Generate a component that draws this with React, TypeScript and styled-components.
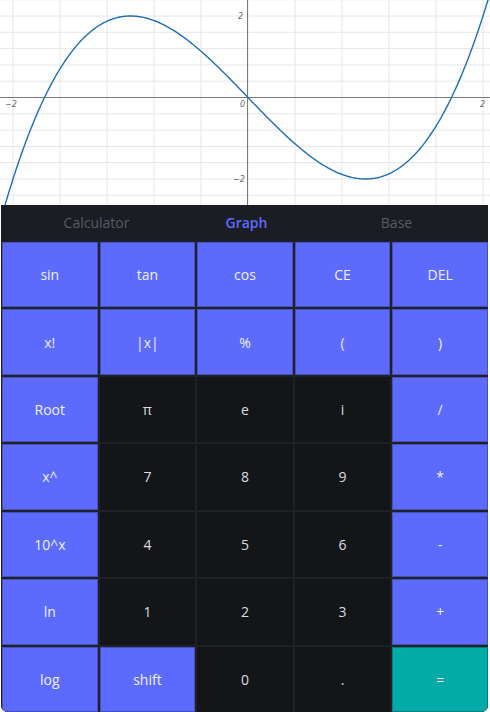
import React from 'react';
import styled, { createGlobalStyle } from 'styled-components';

const GlobalStyle = createGlobalStyle`
  html, body {
    margin: 0;
    padding: 0;
    background: #d6d6d8;
  }
  body {
    font-family: "Open Sans", "Noto Sans", sans-serif;
    overflow: hidden;
  }
`;

const Page = styled.div`
  width: 490px;
  height: 712px;
  display: flex;
  flex-direction: column;
  background: #ffffff;
`;

const Plot = styled.svg`
  display: block;
  flex: 0 0 205px;
  background: #ffffff;
`;

const Panel = styled.div`
  flex: 1;
  margin: 0 2px 0 1px;
  display: flex;
  flex-direction: column;
  background: #1f2026;
  border-radius: 0 0 7px 7px;
  overflow: hidden;
`;

const Tabs = styled.div`
  height: 36px;
  display: flex;
  justify-content: center;
  padding-left: 4px;
  background: #1b1d24;
`;

const Tab = styled.div<{ $active?: boolean }>`
  width: 150px;
  display: flex;
  align-items: center;
  justify-content: center;
  font-size: 14px;
  font-weight: ${p => (p.$active ? 600 : 400)};
  color: ${p => (p.$active ? '#5c6cff' : '#585b63')};
  padding-bottom: 2px;
`;

const Keypad = styled.div`
  flex: 1;
  display: grid;
  grid-template-columns: repeat(5, 1fr);
  grid-template-rows: repeat(7, 1fr);
  gap: 2px;
  padding: 1px 0 0 1px;
  background: #202127;
`;

type Kind = 'fn' | 'num' | 'eq';

const Key = styled.button<{ $kind: Kind }>`
  border: none;
  margin: 0;
  padding: 0;
  font-family: inherit;
  font-size: 14px;
  display: flex;
  align-items: center;
  justify-content: center;
  color: ${p => (p.$kind === 'num' ? '#dcdde2' : '#eef0ff')};
  background: ${p =>
    p.$kind === 'fn' ? '#5c6bfd' : p.$kind === 'eq' ? '#02aaa8' : '#141519'};
  box-shadow: ${p =>
    p.$kind === 'num' ? 'none' : 'inset 0 0 0 1px rgba(0, 0, 0, 0.25)'};
`;

const keys: [string, Kind][] = [
  ['sin', 'fn'], ['tan', 'fn'], ['cos', 'fn'], ['CE', 'fn'], ['DEL', 'fn'],
  ['x!', 'fn'], ['|x|', 'fn'], ['%', 'fn'], ['(', 'fn'], [')', 'fn'],
  ['Root', 'fn'], ['π', 'num'], ['e', 'num'], ['i', 'num'], ['/', 'fn'],
  ['x^', 'fn'], ['7', 'num'], ['8', 'num'], ['9', 'num'], ['*', 'fn'],
  ['10^x', 'fn'], ['4', 'num'], ['5', 'num'], ['6', 'num'], ['-', 'fn'],
  ['ln', 'fn'], ['1', 'num'], ['2', 'num'], ['3', 'num'], ['+', 'fn'],
  ['log', 'fn'], ['shift', 'fn'], ['0', 'num'], ['.', 'num'], ['=', 'eq'],
];

// plot coordinates: origin and pixels per unit
const OX = 248;
const OY = 97.5;
const SX = 117.5;
const SY = 40.75;

const px = (x: number) => OX + x * SX;
const py = (y: number) => OY - y * SY;

const curve = (() => {
  const pts: string[] = [];
  for (let x = -2.2; x <= 2.2001; x += 0.01) {
    const y = x * x * x - 3 * x;
    pts.push(`${px(x).toFixed(2)},${py(y).toFixed(2)}`);
  }
  return 'M' + pts.join('L');
})();

const Graph: React.FC = () => {
  const vLines: number[] = [];
  for (let i = -6; i <= 6; i++) vLines.push(i * 0.4);
  const hLines: number[] = [];
  for (let i = -7; i <= 7; i++) hLines.push(i * 0.4);

  return (
    <Plot width={490} height={205} viewBox="0 0 490 205">
      <g stroke="#e6e6e6" strokeWidth={1}>
        {vLines.map(v => (
          <line key={'v' + v} x1={px(v)} x2={px(v)} y1={0} y2={205} />
        ))}
        {hLines.map(h => (
          <line key={'h' + h} x1={0} x2={490} y1={py(h)} y2={py(h)} />
        ))}
      </g>
      <g stroke="#7a7a7a" strokeWidth={1}>
        <line x1={0} x2={490} y1={OY} y2={OY} />
        <line x1={OX - 0.5} x2={OX - 0.5} y1={0} y2={205} />
      </g>
      <g fill="#6b6b6b" fontSize={8} fontStyle="italic" fontFamily='"DejaVu Sans", sans-serif'>
        <text x={5} y={107}>−2</text>
        <text x={240} y={107}>0</text>
        <text x={480} y={107}>2</text>
        <text x={238} y={19}>2</text>
        <text x={233} y={182}>−2</text>
      </g>
      <path d={curve} fill="none" stroke="#1f6fb8" strokeWidth={1.4} />
    </Plot>
  );
};

const App: React.FC = () => (
  <>
    <GlobalStyle />
    <Page>
      <Graph />
      <Panel>
        <Tabs>
          <Tab>Calculator</Tab>
          <Tab $active>Graph</Tab>
          <Tab>Base</Tab>
        </Tabs>
        <Keypad>
          {keys.map(([label, kind]) => (
            <Key key={label} $kind={kind}>
              {label}
            </Key>
          ))}
        </Keypad>
      </Panel>
    </Page>
  </>
);

export default App;
